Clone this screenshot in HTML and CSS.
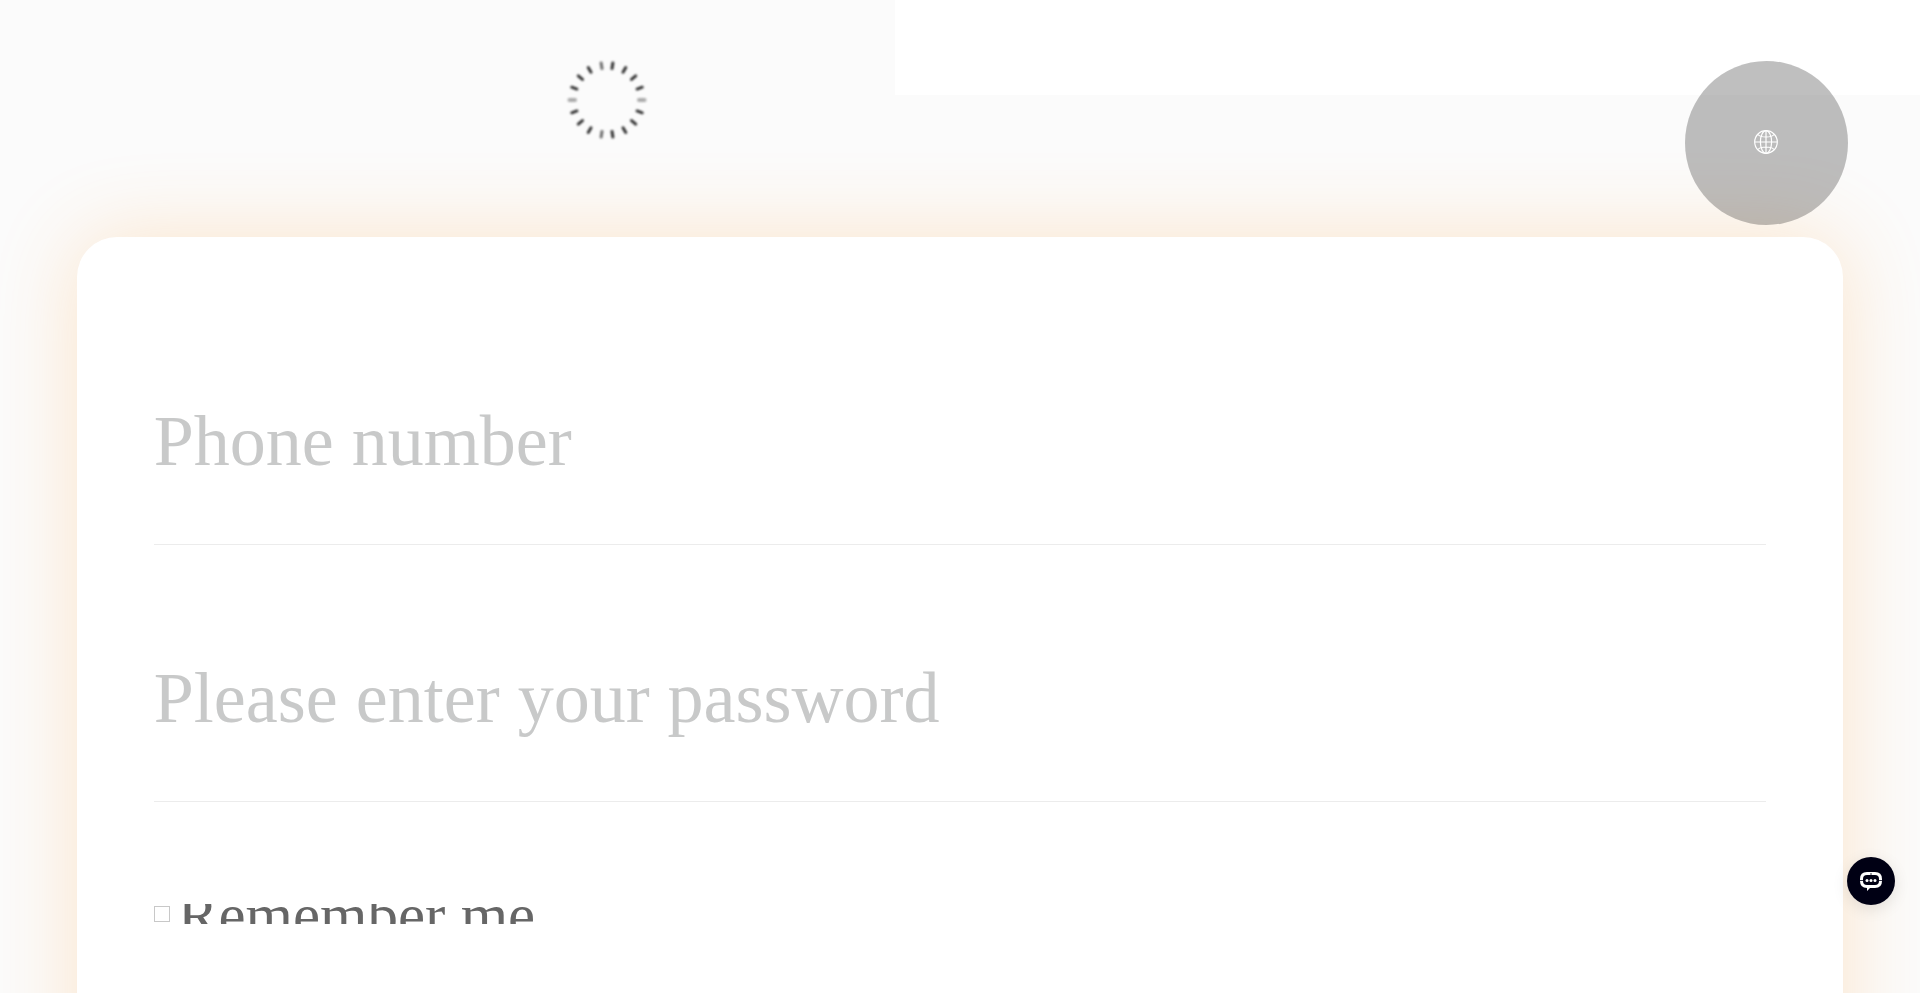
FILE: index.html
```html
<!DOCTYPE html>
<html lang="en">
<head>
<meta charset="utf-8">
<title>Login</title>
<link rel="stylesheet" href="styles.css">
</head>
<body>
<header class="banner">
  <div class="banner-media">
    <svg class="spinner" viewBox="-40 -40 80 80" role="img" aria-label="Loading">
      <defs><path id="t" d="M0-37.500V-32"/></defs>
      <g stroke="#333" stroke-width="3" stroke-linecap="round">
        <use href="#t" transform="rotate(9)"/><use href="#t" transform="rotate(30)"/><use href="#t" transform="rotate(50)"/><use href="#t" transform="rotate(70)"/>
        <use href="#t" transform="rotate(110)"/><use href="#t" transform="rotate(130)"/><use href="#t" transform="rotate(150)"/><use href="#t" transform="rotate(171)"/>
        <use href="#t" transform="rotate(189)" opacity=".7"/><use href="#t" transform="rotate(210)"/><use href="#t" transform="rotate(230)"/><use href="#t" transform="rotate(250)"/>
        <use href="#t" transform="rotate(290)"/><use href="#t" transform="rotate(310)"/><use href="#t" transform="rotate(330)"/><use href="#t" transform="rotate(351)" opacity=".7"/>
      </g>
      <g stroke="#aaa" stroke-width="4" stroke-linecap="round">
        <use href="#t" transform="rotate(90)"/><use href="#t" transform="rotate(270)"/>
      </g>
    </svg>
  </div>
  <div class="banner-blank"></div>
</header>
<button class="language" type="button" aria-label="Language">
  <svg class="globe" viewBox="0 0 24 24" fill="none" stroke="#fff" stroke-width="1.200">
    <circle cx="12" cy="12" r="11.300"/>
    <ellipse cx="12" cy="12" rx="5.600" ry="11.300"/>
    <path d="M12 .8V23.200M.8 12H23.200M4 4.500Q6 7 12 7T20 4.500M4 19.500Q6 17 12 17T20 19.500"/>
  </svg>
</button>
<form class="card">
  <input class="field" type="tel" placeholder="Phone number" aria-label="Phone number">
  <input class="field" type="password" placeholder="Please enter your password" aria-label="Password">
  <div class="remember">
    <input class="tick" type="checkbox" id="remember">
    <label class="remember-label" for="remember">Remember me</label>
  </div>
</form>
<button class="chat" type="button" aria-label="Chat">
  <svg class="chat-icon" viewBox="0 0 24 20">
    <path fill="#fff" d="M8 1H16Q23 1 23 8V10Q23 17 16 17H11L8 20V17Q1 17 1 10V8Q1 1 8 1Z"/>
    <rect x="4" y="4" width="16" height="10" rx="4" fill="#000014"/>
    <path stroke="#000014" stroke-width=".8" d="M0 9.500H5M19 9.500H24M12 2V5"/>
    <g fill="#fff"><circle cx="8" cy="9.500" r="1.500"/><circle cx="12" cy="9.500" r="1.500"/><circle cx="16" cy="9.500" r="1.500"/></g>
  </svg>
</button>
</body>
</html>
```
FILE: styles.css
```css
* { box-sizing: border-box; }
body {
  margin: 0;
  height: 100vh;
  overflow: hidden;
  background: #fbfbfb;
  font-family: "Liberation Serif", serif;
}
.banner { display: flex; height: 237px; }
.banner-media { flex: 0 0 895px; padding: 60px 0 0 567px; }
.spinner { display: block; width: 80px; height: 80px; filter: blur(1px); }
.banner-blank { flex: 1; height: 95px; background: #fff; }
.language {
  position: absolute;
  top: 61px;
  right: 72px;
  z-index: 2;
  display: grid;
  place-items: center;
  width: 163px;
  height: 164px;
  padding: 0 1px 2px 0;
  border: 0;
  border-radius: 50%;
  background: rgba(0, 0, 0, 0.25);
}
.globe { width: 24px; height: 24px; }
.card {
  min-height: 100vh;
  margin: 0 4%;
  padding: 102px 77px;
  border-radius: 40px;
  background: #fff;
  box-shadow: 0 0 84px rgba(255, 160, 50, 0.24);
}
.field {
  display: block;
  width: 100%;
  height: 206px;
  margin: 0 0 51px;
  padding: 0;
  border: 0;
  border-bottom: 1px solid #ececec;
  background: transparent;
  color: #333;
  font: 72px "Liberation Serif", serif;
  outline: 0;
}
.field::placeholder { color: #c8c9c9; opacity: 1; }
.remember { display: flex; align-items: center; gap: 8px; height: 20px; margin-top: 102px; }
.tick {
  appearance: none;
  width: 16px;
  height: 16px;
  margin: 0;
  border: 1px solid #c8c8c8;
  background: #fff;
}
.remember-label { height: 20px; overflow: hidden; color: #666; font-size: 61px; line-height: 24px; }
.chat {
  position: fixed;
  right: 25px;
  bottom: 88px;
  display: grid;
  place-items: center;
  width: 48px;
  height: 48px;
  padding: 0;
  border: 0;
  border-radius: 50%;
  background: #000014;
  box-shadow: 0 4px 16px rgba(0, 0, 0, 0.1);
}
.chat-icon { width: 24px; height: 20px; }
```
